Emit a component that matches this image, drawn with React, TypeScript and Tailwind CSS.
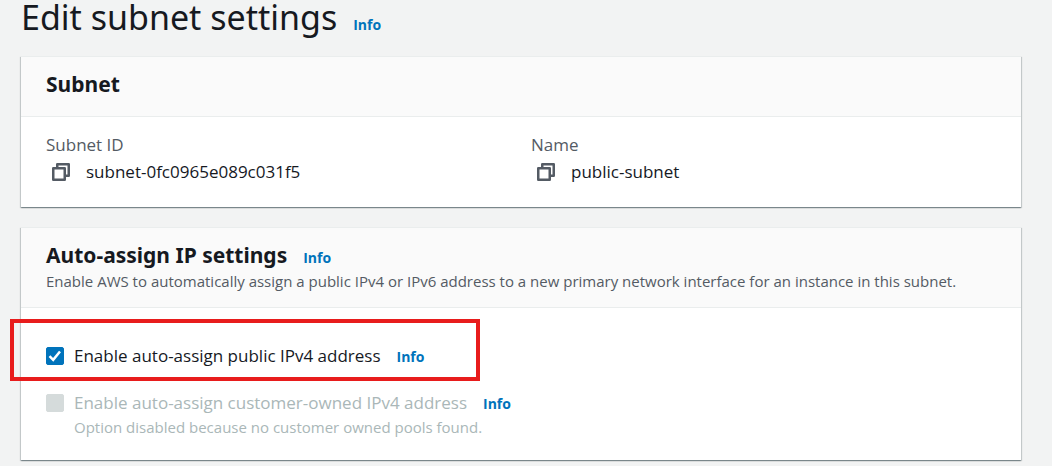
import { useState, type ReactNode } from "react";

function InfoLink() {
  return (
    <a href="#info" className="text-sm leading-5 font-bold text-[#0073bb] hover:underline">
      Info
    </a>
  );
}

function Panel({
  title,
  info,
  description,
  children,
}: {
  title: string;
  info?: boolean;
  description?: string;
  children: ReactNode;
}) {
  return (
    <section className="border-t border-[#eaeded] bg-white shadow-[0_1px_1px_0_rgba(0,28,36,0.3),1px_1px_1px_0_rgba(0,28,36,0.15),-1px_1px_1px_0_rgba(0,28,36,0.15)]">
      <header className="min-h-[60px] border-b border-[#eaeded] bg-[#fafafa] px-[25px] pt-3 pb-[15px]">
        <div className="flex items-baseline gap-4">
          <h2 className="font-['Noto_Sans',sans-serif] text-[21px] leading-[30px] font-bold">{title}</h2>
          {info && <InfoLink />}
        </div>
        {description && <p className="text-[15px] leading-[22px] text-[#545b64]">{description}</p>}
      </header>
      {children}
    </section>
  );
}

function CopyIcon() {
  return (
    <svg viewBox="0 0 18 18" className="size-[18px]" fill="none" stroke="#545b64" strokeWidth="2.500" strokeLinejoin="round" aria-hidden="true">
      <path d="M1.250 5.250h11.500v11.500H1.250z" />
      <path d="M5.250 4.500V1.250h11.500v11.500h-3.300" />
    </svg>
  );
}

function CopyField({ label, value }: { label: string; value: string }) {
  return (
    <div>
      <dt className="leading-[27px] text-[#545b64]">{label}</dt>
      <dd className="flex items-center gap-4 pl-1.5 leading-[27px]">
        <button type="button" aria-label={`Copy ${label}`}>
          <CopyIcon />
        </button>
        {value}
      </dd>
    </div>
  );
}

function Option({
  id,
  label,
  hint,
  disabled,
  highlighted,
  initial = false,
}: {
  id: string;
  label: string;
  hint?: string;
  disabled?: boolean;
  highlighted?: boolean;
  initial?: boolean;
}) {
  const [checked, setChecked] = useState(initial);
  return (
    <div className="relative flex w-fit gap-2.5">
      {highlighted && (
        <div className="pointer-events-none absolute -top-6 -right-14 -bottom-3 -left-9 border-4 border-[#e81c1c]" />
      )}
      <span className="grid h-[26px] place-items-center">
        <input
          id={id}
          type="checkbox"
          checked={checked}
          disabled={disabled}
          onChange={(e) => setChecked(e.target.checked)}
          className="col-start-1 row-start-1 size-[18px] appearance-none rounded-xs border border-[#879596] bg-white checked:border-[#0073bb] checked:bg-[#0073bb] disabled:border-[#d5dbdb] disabled:bg-[#d5dbdb]"
        />
        {checked && (
          <svg viewBox="0 0 18 18" className="pointer-events-none col-start-1 row-start-1 size-[18px]" fill="none" stroke="white" strokeWidth="2.500" aria-hidden="true">
            <path d="M3.500 9.200l3.700 3.600L14 4.500" />
          </svg>
        )}
      </span>
      <div>
        <div className="flex items-baseline gap-4">
          <label htmlFor={id} className={disabled ? "leading-[26px] text-[#aab7b8]" : "leading-[26px]"}>
            {label}
          </label>
          <InfoLink />
        </div>
        {hint && <p className="text-[15px] leading-[22px] text-[#aab7b8]">{hint}</p>}
      </div>
    </div>
  );
}

export default function App() {
  return (
    <main className="min-h-screen bg-[#f2f3f3] pr-[31px] pb-1 pl-[21px] font-['Open_Sans','Noto_Sans',sans-serif] text-[17px] text-[#16191f]">
      <div className="flex items-baseline gap-4 pb-[21px]">
        <h1 className="font-['Noto_Sans',sans-serif] text-[34px] leading-[34px]">Edit subnet settings</h1>
        <InfoLink />
      </div>
      <div className="flex flex-col gap-5">
        <Panel title="Subnet">
          <dl className="grid grid-cols-2 gap-5 px-[25px] pt-[14px] pb-[22px]">
            <CopyField label="Subnet ID" value="subnet-0fc0965e089c031f5" />
            <CopyField label="Name" value="public-subnet" />
          </dl>
        </Panel>
        <Panel
          title="Auto-assign IP settings"
          info
          description="Enable AWS to automatically assign a public IPv4 or IPv6 address to a new primary network interface for an instance in this subnet."
        >
          <div className="flex flex-col gap-[21px] px-[25px] pt-[35px] pb-[22px]">
            <Option id="auto-ipv4" label="Enable auto-assign public IPv4 address" initial highlighted />
            <Option
              id="owned-ipv4"
              label="Enable auto-assign customer-owned IPv4 address"
              hint="Option disabled because no customer owned pools found."
              disabled
            />
          </div>
        </Panel>
      </div>
    </main>
  );
}
